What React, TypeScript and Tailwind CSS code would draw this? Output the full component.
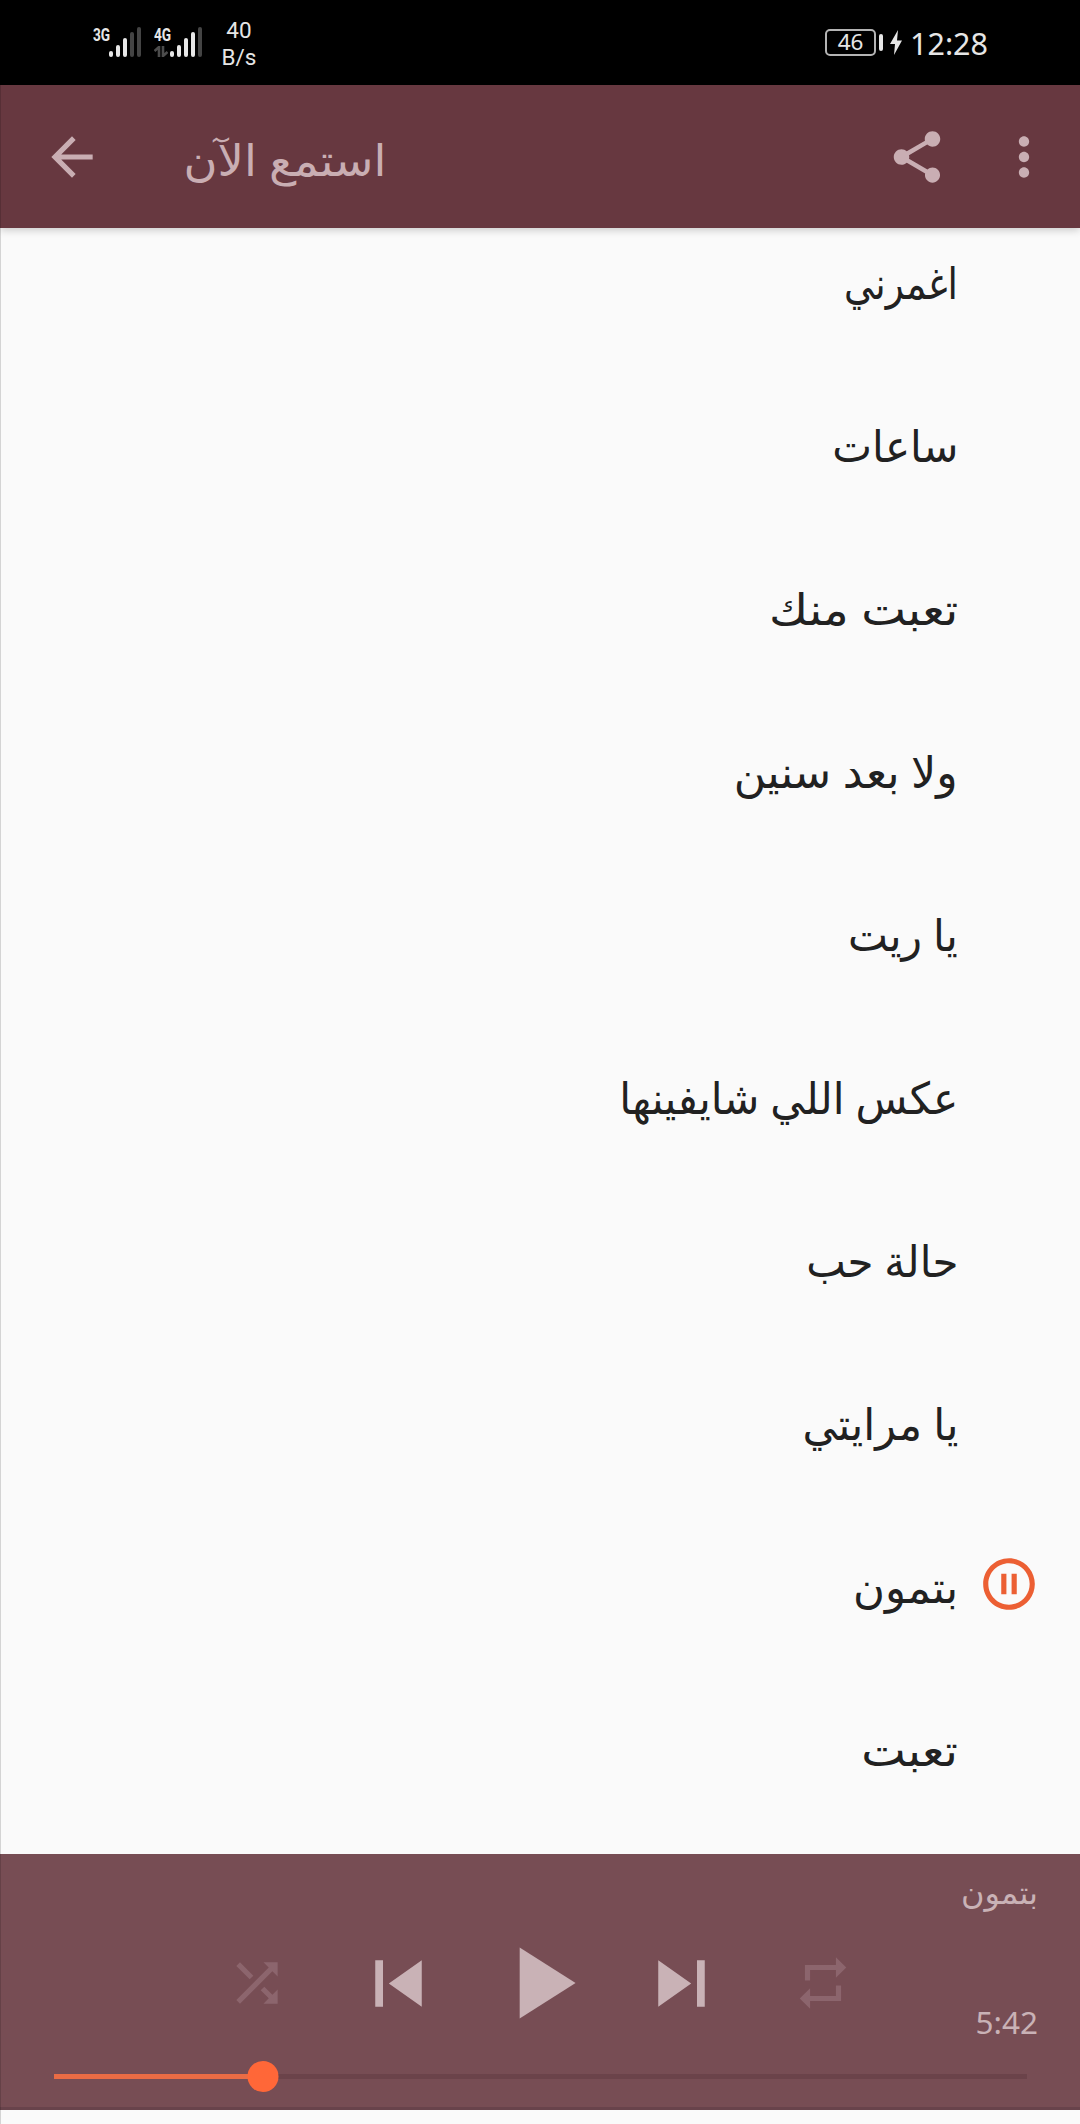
import { clsx } from 'clsx';
import {
  MdArrowBack,
  MdMoreVert,
  MdPauseCircleOutline,
  MdPlayArrow,
  MdRepeat,
  MdShare,
  MdShuffle,
  MdSkipNext,
  MdSkipPrevious,
} from 'react-icons/md';

interface Song {
  title: string;
  stretch: string;
  playing?: boolean;
}

const SONGS: Song[] = [
  { title: 'اغمرني', stretch: 'scale-x-[0.85]' },
  { title: 'ساعات', stretch: 'scale-x-[0.96]' },
  { title: 'تعبت منك', stretch: 'scale-x-[1.08]' },
  { title: 'ولا بعد سنين', stretch: 'scale-x-[1.006]' },
  { title: 'يا ريت', stretch: 'scale-x-[0.965]' },
  { title: 'عكس اللي شايفينها', stretch: 'scale-x-[0.965]' },
  { title: 'حالة حب', stretch: 'scale-x-[0.955]' },
  { title: 'يا مرايتي', stretch: 'scale-x-[0.978]' },
  { title: 'بتمون', stretch: 'scale-x-[0.99]', playing: true },
  { title: 'تعبت', stretch: 'scale-x-[1.075]' },
];

const BAR_HEIGHTS = ['h-1.5', 'h-3', 'h-[19px]', 'h-[25px]', 'h-[30px]'];

const PROGRESS = 21.5;

function Signal({ label, level, data }: { label: string; level: number; data?: boolean }) {
  return (
    <div className="flex h-[30px] w-[50px]">
      <div className="flex w-[16px] flex-col justify-between">
        <span className="h-[14px] w-[26px] origin-left scale-x-[0.72] font-[Roboto,sans-serif] text-[19px] leading-[15px] font-bold text-[#e6e6e6]">
          {label}
        </span>
        {data && (
          <svg viewBox="0 0 14 11" className="h-[11px] w-[14px]" fill="none" stroke="#4c4c4c" strokeWidth="2.6">
            <path d="M5 11V1L0.5 5M9 0v10l4.500-4" />
          </svg>
        )}
      </div>
      <div className="flex items-end gap-[3px]">
        {BAR_HEIGHTS.map((h, i) => (
          <div key={h} className={clsx('w-1 rounded-full', h, i < level ? 'bg-[#e8e8e8]' : 'bg-[#444]')} />
        ))}
      </div>
    </div>
  );
}

function StatusBar() {
  return (
    <div className="flex h-[85px] justify-between bg-black pr-[92px] pl-[93px] text-[#e6e6e6]">
      <div className="flex">
        <div className="flex gap-[11px] pt-[27px]">
          <Signal label="3G" level={3} />
          <Signal label="4G" level={4} data />
        </div>
        <div className="ml-[17px] w-[36px] pt-[17px] text-center font-[Roboto,sans-serif] text-[22.500px] leading-[27px]">
          <p>40</p>
          <p>B/s</p>
        </div>
      </div>
      <div className="mt-[29px] flex h-[27px] items-center self-start font-['Noto_Sans',sans-serif]">
        <div className="flex h-[27px] w-[51px] items-center justify-center rounded-[5px] border-2 border-[#b4b4b4] text-[22.500px] leading-none">
          46
        </div>
        <div className="ml-[3px] h-[17px] w-1 rounded-xs bg-[#e6e6e6]" />
        <svg viewBox="0 0 12 25" className="ml-[7px] h-[25px] w-[12px]" fill="currentColor">
          <path d="M8 0 0 14h5L4 25l8-14.500H7z" />
        </svg>
        <span className="ml-[8px] pt-[2px] text-[30.500px] leading-none">12:28</span>
      </div>
    </div>
  );
}

function Toolbar() {
  return (
    <header className="relative z-10 flex h-[143px] items-center bg-[#673840] pr-[25px] pl-[41px] text-[#c9aeb3] shadow-[0_2px_8px_rgba(0,0,0,0.2)]">
      <MdArrowBack className="size-[62px]" />
      <h1
        dir="rtl"
        className="ml-[80px] w-[203px] pt-[4px] text-right text-[44px] leading-[60px] whitespace-nowrap"
      >
        <span className="inline-block origin-right scale-x-[1.055]">استمع الآن</span>
      </h1>
      <MdShare className="ml-auto size-[62px]" />
      <MdMoreVert className="ml-[45px] size-[62px]" />
    </header>
  );
}

function SongRow({ song }: { song: Song }) {
  return (
    <li dir="rtl" className="flex h-[163px] items-center pr-[40px]">
      <div className="ml-[20px] size-[62px] shrink-0">
        {song.playing && <MdPauseCircleOutline className="size-[62px] text-[#ec5f33]" />}
      </div>
      <span className={clsx('origin-right pt-[4px] text-[44px] leading-[60px] whitespace-nowrap', song.stretch)}>
        {song.title}
      </span>
    </li>
  );
}

function Player() {
  return (
    <footer className="relative h-[256px] border-b-[3px] border-[#68434b] bg-[#774d54] text-[#c9b2b6]">
      <div className="grid h-full grid-cols-[186px_708px_1fr]">
        <div />
        <div className="grid h-[258px] grid-cols-5 items-center justify-items-center">
          <MdShuffle className="size-[62px] text-[#8c656d]" />
          <MdSkipPrevious className="size-[93px]" />
          <MdPlayArrow className="size-[122px]" />
          <MdSkipNext className="size-[93px]" />
          <MdRepeat className="size-[62px] text-[#8c656d]" />
        </div>
        <div className="flex flex-col items-end pr-[42px]">
          <span dir="rtl" className="mt-[16px] text-[32px] leading-[44px]">
            بتمون
          </span>
          <span className="mt-[86px] text-[31.500px] leading-[44px]">5:42</span>
        </div>
      </div>
      {/* Seek bar */}
      <div className="absolute top-[220px] right-[53px] left-[54px] h-[5px] bg-[#6b434a]">
        <div className="h-full bg-[#ea6c45]" style={{ width: `${PROGRESS}%` }} />
        <div
          className="absolute top-[-13px] size-[31px] -translate-x-1/2 rounded-full bg-[#ff6738]"
          style={{ left: `${PROGRESS}%` }}
        />
      </div>
    </footer>
  );
}

export default function App() {
  return (
    <div className="relative flex h-[2124px] w-[1080px] flex-col overflow-hidden bg-[#fafafa] font-['Noto_Sans','DejaVu_Sans',sans-serif]">
      <StatusBar />
      <Toolbar />
      <main className="h-[1626px] overflow-hidden">
        <ul className="-mt-[30px] text-[#212121]">
          {SONGS.map((song) => (
            <SongRow key={song.title} song={song} />
          ))}
        </ul>
      </main>
      <Player />
      <div className="absolute top-[85px] bottom-0 left-0 z-20 w-px bg-black/15" />
    </div>
  );
}
